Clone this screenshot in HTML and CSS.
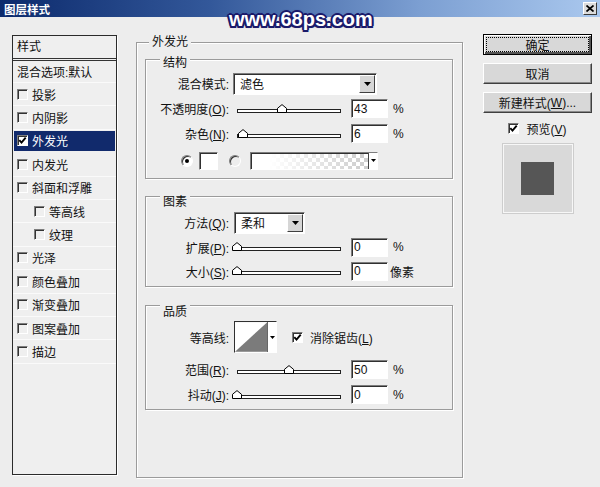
FILE: index.html
```html
<!DOCTYPE html>
<html lang="zh-CN">

<head>
    <meta charset="UTF-8">
    <meta name="viewport" content="width=device-width, initial-scale=1.0">
    <title>图层样式</title>
    <link rel="stylesheet" href="styles.css">
</head>

<body>
    <div class="dialog">
        <div class="titlebar">
            <span class="title">图层样式</span>
            <span class="close-btn">
                <svg width="8" height="7" viewBox="0 0 8 7"><path d="M0.5 0.5L7.5 6.5M7.5 0.5L0.5 6.5" stroke="#000" stroke-width="1.7"/></svg>
            </span>
        </div>
        <div class="watermark">www.68ps.com</div>

        <div class="content">
            <!-- 左侧样式列表 -->
            <div class="style-list">
                <div class="list-head">样式</div>
                <div class="list-item blend">混合选项:默认</div>
                <div class="list-item"><span class="chk"></span>投影</div>
                <div class="list-item"><span class="chk"></span>内阴影</div>
                <div class="list-item selected">
                    <span class="chk checked"><svg width="9" height="9" viewBox="0 0 9 9"><path d="M1.3 4.2L3.5 6.6L7.7 1.6" fill="none" stroke="#000" stroke-width="1.9"/></svg></span>外发光
                </div>
                <div class="list-item"><span class="chk"></span>内发光</div>
                <div class="list-item"><span class="chk"></span>斜面和浮雕</div>
                <div class="list-item sub"><span class="chk"></span>等高线</div>
                <div class="list-item sub"><span class="chk"></span>纹理</div>
                <div class="list-item"><span class="chk"></span>光泽</div>
                <div class="list-item"><span class="chk"></span>颜色叠加</div>
                <div class="list-item"><span class="chk"></span>渐变叠加</div>
                <div class="list-item"><span class="chk"></span>图案叠加</div>
                <div class="list-item"><span class="chk"></span>描边</div>
            </div>

            <!-- 外发光设置 -->
            <div class="panel">
                <div class="group-title outer">外发光</div>

                <div class="group structure">
                    <div class="group-title">结构</div>
                    <div class="row">
                        <label class="label">混合模式:</label>
                        <div class="select blend-mode">
                            <span>滤色</span>
                            <span class="drop-btn"><svg width="7" height="4" viewBox="0 0 7 4"><path d="M0 0H7L3.5 4Z"/></svg></span>
                        </div>
                    </div>
                    <div class="row">
                        <label class="label">不透明度(<u>O</u>):</label>
                        <div class="slider">
                            <div class="track"></div>
                            <svg class="thumb" style="left:44px" width="10" height="9" viewBox="0 0 10 9"><path d="M0.5 8.5V4.3L5 0.6L9.5 4.3V8.5Z" fill="#fff" stroke="#000"/></svg>
                        </div>
                        <input class="num" type="text" value="43">
                        <span class="unit">%</span>
                    </div>
                    <div class="row">
                        <label class="label">杂色(<u>N</u>):</label>
                        <div class="slider">
                            <div class="track"></div>
                            <svg class="thumb" style="left:5px" width="10" height="9" viewBox="0 0 10 9"><path d="M0.5 8.5V4.3L5 0.6L9.5 4.3V8.5Z" fill="#fff" stroke="#000"/></svg>
                        </div>
                        <input class="num" type="text" value="6">
                        <span class="unit">%</span>
                    </div>
                    <div class="row color-row">
                        <span class="radio on"><span class="dot"></span></span>
                        <span class="swatch"></span>
                        <span class="radio second"></span>
                        <div class="gradient-box">
                            <span class="gradient"></span>
                            <span class="mini-drop"><svg width="5" height="3" viewBox="0 0 5 3"><path d="M0 0H5L2.5 3Z"/></svg></span>
                        </div>
                    </div>
                </div>

                <div class="group elements">
                    <div class="group-title">图素</div>
                    <div class="row first">
                        <label class="label">方法(<u>Q</u>):</label>
                        <div class="select method">
                            <span>柔和</span>
                            <span class="drop-btn"><svg width="7" height="4" viewBox="0 0 7 4"><path d="M0 0H7L3.5 4Z"/></svg></span>
                        </div>
                    </div>
                    <div class="row short">
                        <label class="label">扩展(<u>P</u>):</label>
                        <div class="slider">
                            <div class="track"></div>
                            <svg class="thumb" style="left:-1px" width="10" height="9" viewBox="0 0 10 9"><path d="M0.5 8.5V4.3L5 0.6L9.5 4.3V8.5Z" fill="#fff" stroke="#000"/></svg>
                        </div>
                        <input class="num" type="text" value="0">
                        <span class="unit">%</span>
                    </div>
                    <div class="row short">
                        <label class="label">大小(<u>S</u>):</label>
                        <div class="slider">
                            <div class="track"></div>
                            <svg class="thumb" style="left:-1px" width="10" height="9" viewBox="0 0 10 9"><path d="M0.5 8.5V4.3L5 0.6L9.5 4.3V8.5Z" fill="#fff" stroke="#000"/></svg>
                        </div>
                        <input class="num" type="text" value="0">
                        <span class="unit px">像素</span>
                    </div>
                </div>

                <div class="group quality">
                    <div class="group-title">品质</div>
                    <div class="row contour-row">
                        <label class="label">等高线:</label>
                        <div class="contour">
                            <svg width="33" height="30" viewBox="0 0 33 30"><rect width="33" height="30" fill="#fff"/><path d="M0 30L33 0V30Z" fill="#7b7b7b"/></svg>
                            <span class="mini-drop"><svg width="5" height="3" viewBox="0 0 5 3"><path d="M0 0H5L2.5 3Z"/></svg></span>
                        </div>
                        <span class="chk checked anti"><svg width="9" height="9" viewBox="0 0 9 9"><path d="M1.3 4.2L3.5 6.6L7.7 1.6" fill="none" stroke="#000" stroke-width="1.9"/></svg></span>
                        <span class="chk-text">消除锯齿(<u>L</u>)</span>
                    </div>
                    <div class="row">
                        <label class="label">范围(<u>R</u>):</label>
                        <div class="slider">
                            <div class="track"></div>
                            <svg class="thumb" style="left:51px" width="10" height="9" viewBox="0 0 10 9"><path d="M0.5 8.5V4.3L5 0.6L9.5 4.3V8.5Z" fill="#fff" stroke="#000"/></svg>
                        </div>
                        <input class="num" type="text" value="50">
                        <span class="unit">%</span>
                    </div>
                    <div class="row">
                        <label class="label">抖动(<u>J</u>):</label>
                        <div class="slider">
                            <div class="track"></div>
                            <svg class="thumb" style="left:-1px" width="10" height="9" viewBox="0 0 10 9"><path d="M0.5 8.5V4.3L5 0.6L9.5 4.3V8.5Z" fill="#fff" stroke="#000"/></svg>
                        </div>
                        <input class="num" type="text" value="0">
                        <span class="unit">%</span>
                    </div>
                </div>
            </div>

            <!-- 右侧按钮 -->
            <div class="side">
                <button class="btn default"><span class="focus">确定</span></button>
                <button class="btn">取消</button>
                <button class="btn">新建样式(<u>W</u>)...</button>
                <div class="preview-check">
                    <span class="chk checked"><svg width="9" height="9" viewBox="0 0 9 9"><path d="M1.3 4.2L3.5 6.6L7.7 1.6" fill="none" stroke="#000" stroke-width="1.9"/></svg></span>
                    <span>预览(<u>V</u>)</span>
                </div>
                <div class="preview">
                    <div class="preview-swatch"></div>
                </div>
            </div>
        </div>
    </div>
</body>

</html>
```

FILE: styles.css
```css
:root {
    --bg: #ededed;
    --frame: #9b9b9b;
    --dark: #2b2b2b;
    --navy: #112a6c;
}

* {
    box-sizing: border-box;
}

body {
    margin: 0;
    width: 600px;
    height: 487px;
    overflow: hidden;
    font-family: 'Liberation Sans', 'Noto Sans CJK SC', sans-serif;
    font-size: 12px;
    color: #111;
    background-color: var(--bg);
}

u {
    text-decoration: underline;
    text-underline-offset: 1px;
}

.dialog {
    position: relative;
    width: 600px;
    height: 487px;
    background-color: var(--bg);
}

.titlebar {
    height: 17px;
    display: flex;
    align-items: center;
    justify-content: space-between;
    padding: 0 3px 0 4px;
    background: linear-gradient(90deg, #0c2a6c 0%, #33589a 35%, #7c9fd2 70%, #aac8ee 100%);
}

.title {
    color: #fff;
    font-family: 'Noto Sans CJK SC', sans-serif;
    font-weight: 700;
    font-size: 11.5px;
    line-height: 16px;
}

.close-btn {
    width: 14px;
    height: 13px;
    display: flex;
    align-items: center;
    justify-content: center;
    background-color: #dcdcdc;
    border: 1px solid;
    border-color: #fff #3a3a3a #3a3a3a #fff;
}

.watermark {
    position: absolute;
    left: 229px;
    top: 7px;
    font-family: 'Liberation Sans', sans-serif;
    font-weight: 700;
    font-size: 20px;
    line-height: 24px;
    color: #fff;
    text-shadow: -2px 0 #1a1a6a, 2px 0 #1a1a6a, 0 -2px #1a1a6a, 0 2px #1a1a6a,
        -1.5px -1.5px #1a1a6a, 1.5px -1.5px #1a1a6a, -1.5px 1.5px #1a1a6a, 1.5px 1.5px #1a1a6a,
        0 0 3px #1a1a6a;
}

.content {
    display: flex;
    align-items: flex-start;
    padding: 17px 0 0 12px;
}

/* 样式列表 */
.style-list {
    width: 105px;
    height: 440px;
    margin-top: 1px;
    background-color: #efefef;
    border: 1px solid var(--dark);
    box-shadow: 1px 1px 0 #fff;
}

.list-head {
    height: 25px;
    line-height: 22px;
    padding-left: 4px;
    border-bottom: 3px double #333;
}

.list-item {
    height: 23.4px;
    display: flex;
    align-items: center;
    padding-left: 4px;
    border-bottom: 1px solid #fafafa;
    white-space: nowrap;
}

.list-item.blend {
    height: 22px;
}

.list-item.sub {
    padding-left: 21px;
}

.list-item.selected {
    color: #fff;
    background-color: var(--navy);
    border-top: 1px solid #efefef;
    border-bottom: 2px solid #efefef;
    margin: 0 1px;
    padding-left: 3px;
}

.list-item .chk {
    margin-right: 4px;
}

.chk {
    flex: none;
    width: 11px;
    height: 11px;
    display: inline-flex;
    align-items: center;
    justify-content: center;
    border: 1px solid;
    border-color: #7d7d7d #fff #fff #7d7d7d;
    box-shadow: inset 1px 1px 0 #333;
}

.chk.checked {
    background-color: #fff;
}

/* 外发光面板 */
.panel {
    width: 327px;
    height: 436px;
    margin: 8px 0 0 19px;
    padding: 0 9px 0 8px;
    border: 1px solid var(--frame);
    box-shadow: 1px 1px 0 #fff, inset 1px 1px 0 #fff;
}

.group-title {
    width: max-content;
    margin: -9px 0 0 14px;
    padding: 0 3px;
    line-height: 16px;
    background-color: var(--bg);
}

.group-title.outer {
    margin-left: 4px;
}

.group {
    border: 1px solid var(--frame);
    box-shadow: 1px 1px 0 #fff, inset 1px 1px 0 #fff;
}

.structure {
    margin-top: 9px;
    padding: 4px 0 5px;
}

.elements {
    margin-top: 17px;
    padding: 6px 0 3px;
}

.quality {
    margin-top: 18px;
    padding: 7px 0 2px;
}

.row {
    height: 25px;
    display: flex;
    align-items: center;
}

.row.short {
    height: 24px;
}

.label {
    width: 83px;
    text-align: right;
    white-space: nowrap;
}

.select {
    height: 22px;
    margin-left: 4px;
    display: flex;
    align-items: center;
    justify-content: space-between;
    padding: 0 1px 0 6px;
    background-color: #fff;
    border: 1px solid;
    border-color: #7d7d7d #fff #fff #7d7d7d;
    box-shadow: inset 1px 1px 0 #303030;
}

.blend-mode {
    width: 144px;
}

.method {
    width: 71px;
    margin-left: 5px;
}

.drop-btn {
    width: 16px;
    height: 18px;
    display: flex;
    align-items: center;
    justify-content: center;
    background-color: #d6d6d6;
    border: 1px solid;
    border-color: #fff #404040 #404040 #fff;
}

.slider {
    position: relative;
    width: 112px;
    height: 10px;
    margin-left: 4px;
}

.track {
    height: 4px;
    margin: 5px 4px 0;
    background-color: #fff;
    border: 1px solid #222;
}

.thumb {
    position: absolute;
    top: 0;
}

.num {
    width: 37px;
    height: 19px;
    margin-left: 6px;
    padding: 0 2px;
    font: inherit;
    color: #111;
    background-color: #fff;
    border: 1px solid;
    border-color: #7d7d7d #fff #fff #7d7d7d;
    box-shadow: inset 1px 1px 0 #303030;
    outline: none;
}

.unit {
    margin-left: 5px;
}

.unit.px {
    margin-left: 2px;
}

.color-row {
    margin-top: 2px;
    padding-left: 35px;
}

.radio {
    width: 12px;
    height: 12px;
    display: inline-flex;
    align-items: center;
    justify-content: center;
    border-radius: 50%;
    border: 1px solid;
    border-color: #7d7d7d #fff #fff #7d7d7d;
    box-shadow: inset 1px 1px 0 #333;
}

.radio.on {
    background-color: #fff;
}

.radio .dot {
    width: 4px;
    height: 4px;
    border-radius: 50%;
    background-color: #000;
}

.radio.second {
    margin-left: 11px;
}

.swatch {
    width: 19px;
    height: 18px;
    margin-left: 6px;
    background-color: #fff;
    border: 1px solid;
    border-color: #7d7d7d #fff #fff #7d7d7d;
    box-shadow: inset 1px 1px 0 #303030;
}

.gradient-box {
    width: 128px;
    height: 18px;
    margin-left: 9px;
    display: flex;
    border: 1px solid;
    border-color: #7d7d7d #fff #fff #7d7d7d;
    box-shadow: inset 1px 1px 0 #303030;
}

.gradient {
    flex: 1;
    margin: 1px 0 0 1px;
    background: linear-gradient(90deg, #fff 15%, rgba(255, 255, 255, 0) 95%),
        repeating-conic-gradient(#cfcfcf 0 25%, #fff 0 50%) 0 0 / 8px 8px;
}

.mini-drop {
    width: 9px;
    display: flex;
    align-items: center;
    justify-content: center;
    background-color: #fff;
    border-left: 1px solid #444;
}

.contour-row {
    height: 34px;
    margin-bottom: 3px;
}

.contour {
    width: 43px;
    height: 32px;
    margin-left: 5px;
    display: flex;
    border: 1px solid;
    border-color: #303030 #fff #fff #303030;
}

.contour svg {
    display: block;
}

.contour .mini-drop {
    width: 9px;
    border-left: 1px solid #666;
}

.chk.anti {
    margin-left: 15px;
}

.chk-text {
    margin-left: 7px;
}

/* 右侧 */
.side {
    width: 109px;
    margin-left: 20px;
    display: flex;
    flex-direction: column;
    align-items: center;
}

.btn {
    width: 109px;
    height: 21px;
    margin-bottom: 8px;
    padding: 0;
    display: flex;
    align-items: center;
    justify-content: center;
    font: inherit;
    color: #111;
    background-color: #d8d8d8;
    border: 1px solid;
    border-color: #fff #404040 #404040 #fff;
    box-shadow: inset -1px -1px 0 #8a8a8a;
}

.btn.default {
    border-color: #000;
    box-shadow: inset 1px 1px 0 #fff, inset -2px -2px 0 #555;
    padding: 2px;
}

.btn .focus {
    width: 100%;
    height: 100%;
    display: flex;
    align-items: center;
    justify-content: center;
    border: 1px dotted #000;
}

.preview-check {
    height: 16px;
    margin-top: -1px;
    display: flex;
    align-items: center;
    gap: 7px;
}

.preview {
    width: 70px;
    height: 69px;
    margin-top: 8px;
    display: flex;
    align-items: center;
    justify-content: center;
    background-color: #d9d9d9;
    border: 1px solid #f7f7f7;
    box-shadow: 0 0 0 1px #cdcdcd;
}

.preview-swatch {
    width: 33px;
    height: 33px;
    background-color: #565656;
}
```
